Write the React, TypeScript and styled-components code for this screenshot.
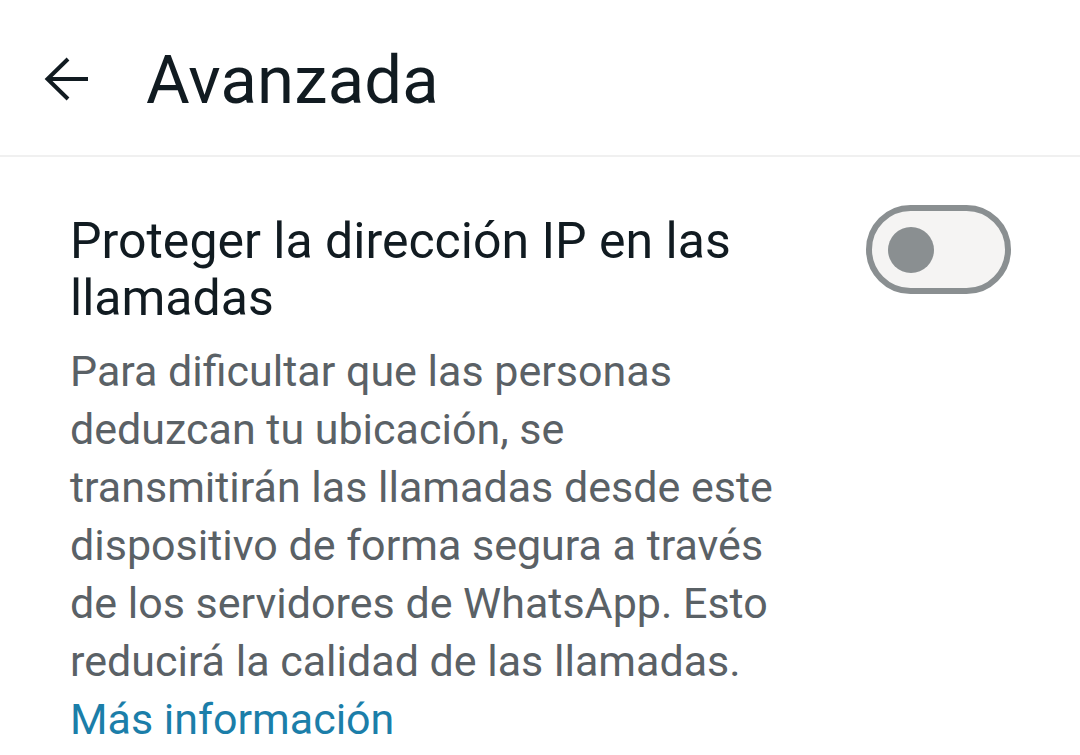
import React, {useState} from 'react';
import styled, {createGlobalStyle} from 'styled-components';

const GlobalStyle = createGlobalStyle`
  html, body {
    margin: 0;
    padding: 0;
    background: #ffffff;
  }
  body {
    font-family: Roboto, "Noto Sans", "Liberation Sans", sans-serif;
    -webkit-font-smoothing: antialiased;
  }
`;

const Page = styled.div`
  width: 1080px;
  height: 755px;
  overflow: hidden;
  background: #fff;
`;

const Toolbar = styled.header`
  height: 157px;
  display: flex;
  align-items: center;
  border-bottom: 2px solid #f0f0f0;
  box-sizing: border-box;
  padding-left: 43px;
`;

const BackButton = styled.button`
  width: 48px;
  height: 48px;
  border: none;
  background: none;
  padding: 0;
  display: flex;
  align-items: center;
  justify-content: center;
  margin-right: 55px;
  margin-top: 4px;
  cursor: pointer;
`;

const Title = styled.h1`
  margin: 4px 0 0;
  font-size: 67px;
  font-weight: 400;
  color: #111b21;
  letter-spacing: 0.2px;
`;

const Setting = styled.section`
  display: flex;
  justify-content: space-between;
  align-items: flex-start;
  padding: 56px 69px 0 70px;
`;

const TextColumn = styled.div`
  width: 720px;
`;

const Heading = styled.h2`
  margin: 0;
  font-size: 50px;
  line-height: 57px;
  font-weight: 400;
  color: #111b21;
`;

const Description = styled.p`
  margin: 15px 0 0;
  font-size: 43px;
  line-height: 58px;
  color: #5a6166;
`;

const Link = styled.a`
  display: block;
  color: #1b7ea9;
  text-decoration: none;
`;

const Track = styled.button<{$on: boolean}>`
  flex: none;
  width: 145px;
  height: 89px;
  margin-top: -8px;
  border-radius: 45px;
  border: 6px solid ${p => (p.$on ? '#1daa61' : '#8a8f91')};
  background: ${p => (p.$on ? '#d8fdd2' : '#f5f4f3')};
  box-sizing: border-box;
  padding: 0 0 0 ${p => (p.$on ? '61px' : '16px')};
  display: flex;
  align-items: center;
  cursor: pointer;
`;

const Knob = styled.span<{$on: boolean}>`
  width: 46px;
  height: 46px;
  border-radius: 50%;
  background: ${p => (p.$on ? '#1daa61' : '#8a8f91')};
`;

const ArrowIcon = () => (
  <svg width="46" height="46" viewBox="0 0 46 46" fill="none" stroke="#111b21" strokeWidth="4" strokeLinecap="butt">
    <path d="M44 22 H4"/>
    <path d="M24 2 L3.5 22 L24 42"/>
  </svg>
);

const App: React.FC = () => {
  const [on, setOn] = useState(false);
  return (
    <Page>
      <GlobalStyle/>
      <Toolbar>
        <BackButton aria-label="Atrás"><ArrowIcon/></BackButton>
        <Title>Avanzada</Title>
      </Toolbar>
      <Setting>
        <TextColumn>
          <Heading>Proteger la dirección IP en las llamadas</Heading>
          <Description>
            Para dificultar que las personas deduzcan tu ubicación, se transmitirán las llamadas desde este
            dispositivo de forma segura a través de los servidores de WhatsApp. Esto reducirá la calidad de las
            llamadas.
            <Link href="#">Más información</Link>
          </Description>
        </TextColumn>
        <Track $on={on} onClick={() => setOn(!on)} aria-label="Proteger la dirección IP">
          <Knob $on={on}/>
        </Track>
      </Setting>
    </Page>
  );
};

export default App;
